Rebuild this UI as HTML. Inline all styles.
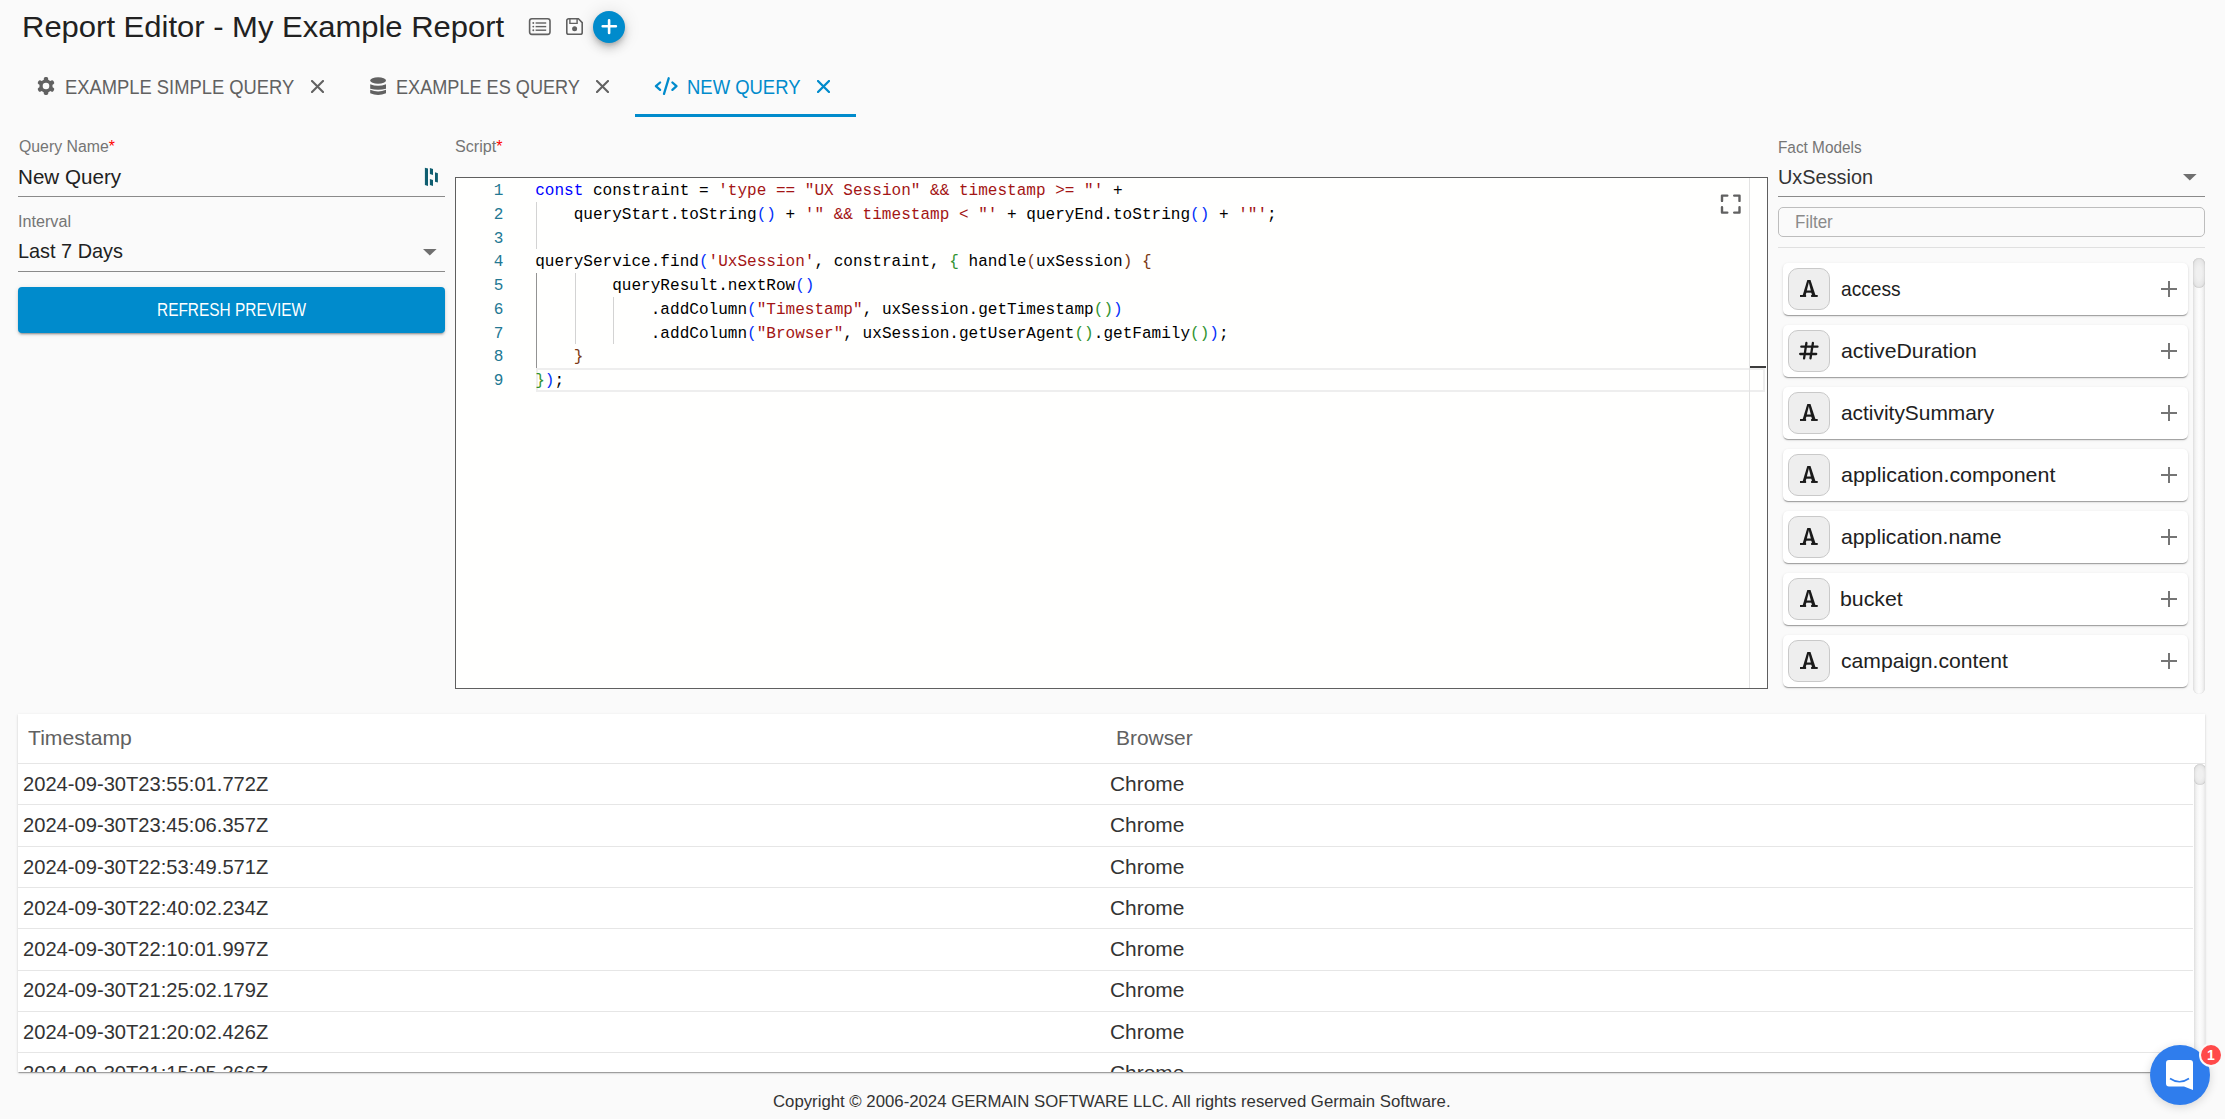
<!DOCTYPE html>
<html><head><meta charset="utf-8">
<style>
*{box-sizing:border-box;margin:0;padding:0}
html,body{width:2225px;height:1119px;overflow:hidden;background:#fafafa;font-family:"Liberation Sans",sans-serif;color:#212121;position:relative}
.abs{position:absolute}
.t{position:absolute;white-space:pre;line-height:1;transform-origin:0 0}
.uline{position:absolute;height:1px;background:#8a8a8a}
.ln{position:absolute;left:0;width:47.5px;margin-top:2px;text-align:right;font-family:"Liberation Mono",monospace;font-size:16.06px;color:#237893;line-height:23.75px}
.code{position:absolute;left:79.2px;margin-top:2px;font-family:"Liberation Mono",monospace;font-size:16.06px;color:#000;white-space:pre;line-height:23.75px}
.k{color:#0000ff}.s{color:#a31515}.b1{color:#0431fa}.b2{color:#319331}.b3{color:#7b3814}
.guide{position:absolute;width:1px}
.card{position:absolute;left:1783px;width:405px;height:52px;background:#fff;border-radius:5px;box-shadow:0 2px 1px -1px rgba(0,0,0,.2),0 1px 1px 0 rgba(0,0,0,.14),0 1px 3px 0 rgba(0,0,0,.12)}
.card .ic{position:absolute;left:5px;top:5px;width:42px;height:42px;background:#eeeeee;border:1px solid #c9c9c9;border-radius:10px}
.pl{position:absolute;width:16px;height:16px}
.pl:before{content:"";position:absolute;left:0;top:7px;width:16px;height:2px;background:#757575}
.pl:after{content:"";position:absolute;left:7px;top:0;width:2px;height:16px;background:#757575}
.sb{position:absolute;width:12px;border-radius:6px;background:linear-gradient(to right,#e2e2e2,#f6f6f6 25%,#fdfdfd 50%,#f6f6f6 75%,#e2e2e2);box-shadow:inset 0 0 1px rgba(0,0,0,.15)}
.thumb{position:absolute;left:0;width:12px;border-radius:6px;background:radial-gradient(ellipse at center,#f0f0f0 30%,#dcdcdc 100%);box-shadow:inset 0 0 1.5px rgba(0,0,0,.25)}
</style></head><body>

<div class="t" style="left:22.22px;top:12.37px;font-size:29.8px;color:#212121;transform:scaleX(1.0400);">Report Editor - My Example Report</div>
<svg class="abs" style="left:528px;top:17px" width="24" height="19" viewBox="0 0 24 19">
  <rect x="1.6" y="1.8" width="20.4" height="15.6" rx="2.3" fill="none" stroke="#616161" stroke-width="1.6"/>
  <circle cx="5.3" cy="6" r="0.95" fill="#616161"/><circle cx="5.3" cy="9.6" r="0.95" fill="#616161"/><circle cx="5.3" cy="13.2" r="0.95" fill="#616161"/>
  <rect x="7.6" y="5.3" width="10.6" height="1.4" fill="#616161"/><rect x="7.6" y="8.9" width="10.6" height="1.4" fill="#616161"/><rect x="7.6" y="12.5" width="10.6" height="1.4" fill="#616161"/>
</svg>
<svg class="abs" style="left:565px;top:17px" width="19" height="19" viewBox="0 0 19 19">
  <path d="M3.6 1.8 H13.4 L17.2 5.6 V15.4 a1.8 1.8 0 0 1 -1.8 1.8 H3.6 a1.8 1.8 0 0 1 -1.8 -1.8 V3.6 a1.8 1.8 0 0 1 1.8 -1.8z" fill="none" stroke="#616161" stroke-width="1.6"/>
  <path d="M4.9 1.8 V6.4 H12.1 V1.8" fill="none" stroke="#616161" stroke-width="1.4"/>
  <circle cx="9.6" cy="11.8" r="2.5" fill="#616161"/>
</svg>
<div class="abs" style="left:593px;top:11px;width:32px;height:32px;border-radius:50%;background:#008bcc;box-shadow:0 3px 5px -1px rgba(0,0,0,.2),0 6px 10px 0 rgba(0,0,0,.14),0 1px 18px 0 rgba(0,0,0,.12)">
  <svg class="abs" style="left:0;top:0" width="32" height="32" viewBox="0 0 32 32"><path d="M9.7 15.3H22.9M16.1 9.2V21.9" stroke="#fff" stroke-width="2.6" stroke-linecap="round"/></svg>
</div>
<svg class="abs" style="left:37.35px;top:77.1px" width="18" height="18" viewBox="-9 -9 18 18"><g fill="#616161"><rect x="-2.2" y="-8.9" width="4.4" height="17.8" rx="1.6"/><rect x="-2.2" y="-8.9" width="4.4" height="17.8" rx="1.6" transform="rotate(60)"/><rect x="-2.2" y="-8.9" width="4.4" height="17.8" rx="1.6" transform="rotate(120)"/><circle r="6.6"/></g><circle r="3.3" fill="#fafafa"/></svg>
<svg class="abs" style="left:311.3px;top:80px" width="13" height="13" viewBox="0 0 13 13"><path d="M1 1L12 12M12 1L1 12" stroke="#616161" stroke-width="2.1" stroke-linecap="round"/></svg>
<svg class="abs" style="left:369px;top:76px" width="18" height="21" viewBox="0 0 18 21"><g fill="#616161"><ellipse cx="9.1" cy="4.45" rx="7.9" ry="3.2"/><path d="M1.2 8.2Q9.1 11.4 17 8.2V12.8Q9.1 14.8 1.2 12.8Z"/><path d="M1.2 13.8Q9.1 17 17 13.8V17.3Q9.1 20.5 1.2 17.3Z"/></g></svg>
<svg class="abs" style="left:596.3px;top:80px" width="13" height="13" viewBox="0 0 13 13"><path d="M1 1L12 12M12 1L1 12" stroke="#616161" stroke-width="2.1" stroke-linecap="round"/></svg>
<svg class="abs" style="left:650px;top:72px" width="32" height="28" viewBox="0 0 32 28"><path d="M10.1 10.5L5.9 14.2L10.1 17.9M22.4 10.5L26.5 14.2L22.4 17.9M18.7 6.3L14 21.8" fill="none" stroke="#008bcc" stroke-width="2.3" stroke-linecap="round" stroke-linejoin="round"/></svg>
<svg class="abs" style="left:817px;top:80px" width="13" height="13" viewBox="0 0 13 13"><path d="M1 1L12 12M12 1L1 12" stroke="#008bcc" stroke-width="2.3" stroke-linecap="round"/></svg>
<div class="abs" style="left:635px;top:114px;width:221px;height:3px;background:#008bcc"></div>
<div class="t" style="left:65.43px;top:76.42px;font-size:21px;color:#616161;transform:scaleX(0.8744);">EXAMPLE SIMPLE QUERY</div>
<div class="t" style="left:395.84px;top:76.42px;font-size:21px;color:#616161;transform:scaleX(0.8625);">EXAMPLE ES QUERY</div>
<div class="t" style="left:687.12px;top:76.42px;font-size:21px;color:#008bcc;transform:scaleX(0.8789);">NEW QUERY</div>
<div class="t" style="left:18.60px;top:139.45px;font-size:16px;color:#757575;transform:scaleX(0.9897);">Query Name<span style="color:#f00">*</span></div>
<div class="t" style="left:17.59px;top:166.54px;font-size:20.5px;color:#212121;transform:scaleX(1.0061);">New Query</div>
<svg class="abs" style="left:424px;top:167px" width="15" height="20" viewBox="0 0 15 20"><g fill="#0f5e70"><path d="M0.9 0.7L4 1.6V19L0.9 18.1z"/><path d="M5.9 1L9 1.9V7.9L5.9 7z"/><path d="M5.9 12L9 12.9V18.9L5.9 18z"/><path d="M11 5.3L13.9 6.2V15.6L11 14.7z"/></g></svg>
<div class="uline" style="left:18px;top:196px;width:427px"></div>
<div class="t" style="left:17.59px;top:214.45px;font-size:16px;color:#757575;transform:scaleX(1.0095);">Interval</div>
<div class="t" style="left:17.64px;top:241.27px;font-size:20.7px;color:#212121;transform:scaleX(0.9602);">Last 7 Days</div>
<svg class="abs" style="left:423.2px;top:249px" width="14" height="7" viewBox="0 0 14 7"><path d="M0 0H13.6L6.8 6.6z" fill="#6f6f6f"/></svg>
<div class="uline" style="left:18px;top:271px;width:427px"></div>
<div class="abs" style="left:18px;top:287px;width:427px;height:46px;background:#008bcc;border-radius:4px;box-shadow:0 3px 1px -2px rgba(0,0,0,.2),0 2px 2px 0 rgba(0,0,0,.14),0 1px 5px 0 rgba(0,0,0,.12)"></div>
<div class="t" style="left:156.98px;top:300.90px;font-size:18.9px;color:#ffffff;transform:scaleX(0.8168);">REFRESH PREVIEW</div>
<div class="t" style="left:455.40px;top:139.45px;font-size:16px;color:#757575;transform:scaleX(1.0086);">Script<span style="color:#f00">*</span></div>
<div class="abs" style="left:455px;top:177px;width:1313px;height:512px;border:1px solid #5f5f5f;background:#fffffe;overflow:hidden">
<div class="abs" style="left:80px;top:190.00px;width:1229px;height:24px;border:2px solid #eeeeee"></div>
<div class="guide" style="left:80px;top:23.75px;height:47.50px;background:#d3d3d3"></div>
<div class="guide" style="left:80px;top:95.00px;height:95.00px;background:#939393"></div>
<div class="guide" style="left:118.5px;top:95.00px;height:71.25px;background:#d3d3d3"></div>
<div class="guide" style="left:157px;top:118.75px;height:47.50px;background:#d3d3d3"></div>
<div class="ln" style="top:0.00px">1</div>
<div class="code" style="top:0.00px"><span class="k">const</span> constraint = <span class="s">'type == "UX Session" &amp;&amp; timestamp &gt;= "'</span> +</div>
<div class="ln" style="top:23.75px">2</div>
<div class="code" style="top:23.75px">    queryStart.toString<span class="b1">()</span> + <span class="s">'" &amp;&amp; timestamp &lt; "'</span> + queryEnd.toString<span class="b1">()</span> + <span class="s">'"'</span>;</div>
<div class="ln" style="top:47.50px">3</div>
<div class="code" style="top:47.50px"></div>
<div class="ln" style="top:71.25px">4</div>
<div class="code" style="top:71.25px">queryService.find<span class="b1">(</span><span class="s">'UxSession'</span>, constraint, <span class="b2">{</span> handle<span class="b3">(</span>uxSession<span class="b3">)</span> <span class="b3">{</span></div>
<div class="ln" style="top:95.00px">5</div>
<div class="code" style="top:95.00px">        queryResult.nextRow<span class="b1">()</span></div>
<div class="ln" style="top:118.75px">6</div>
<div class="code" style="top:118.75px">            .addColumn<span class="b1">(</span><span class="s">"Timestamp"</span>, uxSession.getTimestamp<span class="b2">()</span><span class="b1">)</span></div>
<div class="ln" style="top:142.50px">7</div>
<div class="code" style="top:142.50px">            .addColumn<span class="b1">(</span><span class="s">"Browser"</span>, uxSession.getUserAgent<span class="b2">()</span>.getFamily<span class="b2">()</span><span class="b1">)</span>;</div>
<div class="ln" style="top:166.25px">8</div>
<div class="code" style="top:166.25px">    <span class="b3">}</span></div>
<div class="ln" style="top:190.00px">9</div>
<div class="code" style="top:190.00px"><span class="b2">}</span><span class="b1">)</span>;</div>
<div class="abs" style="left:1293px;top:0;width:1px;height:510px;background:#e3e3e3"></div>
<div class="abs" style="left:1294px;top:188px;width:16px;height:2px;background:#3c3c3c"></div>
<svg class="abs" style="left:1264px;top:16px" width="22" height="21" viewBox="0 0 22 21"><path d="M2 6.9V1.6H7.3M14.2 1.6H19.5V6.9M19.5 13.3V18.6H14.2M7.3 18.6H2V13.3" fill="none" stroke="#616161" stroke-width="2.4" stroke-linecap="round" stroke-linejoin="round"/></svg>
</div>
<div class="t" style="left:1777.76px;top:139.20px;font-size:16.3px;color:#757575;transform:scaleX(0.9425);">Fact Models</div>
<div class="t" style="left:1777.75px;top:165.72px;font-size:21px;color:#333333;transform:scaleX(0.9474);">UxSession</div>
<svg class="abs" style="left:2183.2px;top:174px" width="14" height="7" viewBox="0 0 14 7"><path d="M0 0H13.6L6.8 6.6z" fill="#6f6f6f"/></svg>
<div class="uline" style="left:1778px;top:196px;width:427px"></div>
<div class="abs" style="left:1778px;top:207px;width:427px;height:30px;border:1px solid #bdbdbd;border-radius:5px;background:#fafafa"></div>
<div class="t" style="left:1794.84px;top:213.81px;font-size:17.7px;color:#8a8a8a;transform:scaleX(0.9606);">Filter</div>
<div class="abs" style="left:1778px;top:247px;width:427px;height:1px;background:#e0e0e0"></div>
<div class="card" style="top:263px"><div class="ic"><svg class="abs" style="left:0;top:0" width="40" height="40" viewBox="0 0 40 40"><g fill="#1a1a1a"><path d="M18.3 11H20.4L16.7 26.2H13.7Z"/><path d="M19.2 11H21.5L26.5 26.2H23Z"/><rect x="16.4" y="21.5" width="7.2" height="2.2"/><rect x="11" y="26" width="6.1" height="1.95"/><rect x="22.1" y="26" width="6.6" height="1.95"/></g></svg></div><div class="pl" style="left:378px;top:17.5px"></div></div>
<div class="t" style="left:1840.60px;top:278.96px;font-size:20.6px;color:#212121;transform:scaleX(0.9311);">access</div>
<div class="card" style="top:325px"><div class="ic"><svg class="abs" style="left:0;top:0" width="40" height="40" viewBox="0 0 40 40"><g fill="none" stroke="#1a1a1a" stroke-width="2.3" stroke-linecap="round"><path d="M17.4 12L15.1 27.3M23.9 12L21.5 27.3M12.3 15.7H28.5M11.2 23H27.2"/></g></svg></div><div class="pl" style="left:378px;top:17.5px"></div></div>
<div class="t" style="left:1840.60px;top:340.96px;font-size:20.6px;color:#212121;transform:scaleX(1.0314);">activeDuration</div>
<div class="card" style="top:387px"><div class="ic"><svg class="abs" style="left:0;top:0" width="40" height="40" viewBox="0 0 40 40"><g fill="#1a1a1a"><path d="M18.3 11H20.4L16.7 26.2H13.7Z"/><path d="M19.2 11H21.5L26.5 26.2H23Z"/><rect x="16.4" y="21.5" width="7.2" height="2.2"/><rect x="11" y="26" width="6.1" height="1.95"/><rect x="22.1" y="26" width="6.6" height="1.95"/></g></svg></div><div class="pl" style="left:378px;top:17.5px"></div></div>
<div class="t" style="left:1840.60px;top:402.96px;font-size:20.6px;color:#212121;transform:scaleX(1.0142);">activitySummary</div>
<div class="card" style="top:449px"><div class="ic"><svg class="abs" style="left:0;top:0" width="40" height="40" viewBox="0 0 40 40"><g fill="#1a1a1a"><path d="M18.3 11H20.4L16.7 26.2H13.7Z"/><path d="M19.2 11H21.5L26.5 26.2H23Z"/><rect x="16.4" y="21.5" width="7.2" height="2.2"/><rect x="11" y="26" width="6.1" height="1.95"/><rect x="22.1" y="26" width="6.6" height="1.95"/></g></svg></div><div class="pl" style="left:378px;top:17.5px"></div></div>
<div class="t" style="left:1840.60px;top:464.96px;font-size:20.6px;color:#212121;transform:scaleX(1.0404);">application.component</div>
<div class="card" style="top:511px"><div class="ic"><svg class="abs" style="left:0;top:0" width="40" height="40" viewBox="0 0 40 40"><g fill="#1a1a1a"><path d="M18.3 11H20.4L16.7 26.2H13.7Z"/><path d="M19.2 11H21.5L26.5 26.2H23Z"/><rect x="16.4" y="21.5" width="7.2" height="2.2"/><rect x="11" y="26" width="6.1" height="1.95"/><rect x="22.1" y="26" width="6.6" height="1.95"/></g></svg></div><div class="pl" style="left:378px;top:17.5px"></div></div>
<div class="t" style="left:1840.60px;top:526.96px;font-size:20.6px;color:#212121;transform:scaleX(1.0313);">application.name</div>
<div class="card" style="top:573px"><div class="ic"><svg class="abs" style="left:0;top:0" width="40" height="40" viewBox="0 0 40 40"><g fill="#1a1a1a"><path d="M18.3 11H20.4L16.7 26.2H13.7Z"/><path d="M19.2 11H21.5L26.5 26.2H23Z"/><rect x="16.4" y="21.5" width="7.2" height="2.2"/><rect x="11" y="26" width="6.1" height="1.95"/><rect x="22.1" y="26" width="6.6" height="1.95"/></g></svg></div><div class="pl" style="left:378px;top:17.5px"></div></div>
<div class="t" style="left:1839.57px;top:588.96px;font-size:20.6px;color:#212121;transform:scaleX(1.0341);">bucket</div>
<div class="card" style="top:635px"><div class="ic"><svg class="abs" style="left:0;top:0" width="40" height="40" viewBox="0 0 40 40"><g fill="#1a1a1a"><path d="M18.3 11H20.4L16.7 26.2H13.7Z"/><path d="M19.2 11H21.5L26.5 26.2H23Z"/><rect x="16.4" y="21.5" width="7.2" height="2.2"/><rect x="11" y="26" width="6.1" height="1.95"/><rect x="22.1" y="26" width="6.6" height="1.95"/></g></svg></div><div class="pl" style="left:378px;top:17.5px"></div></div>
<div class="t" style="left:1840.60px;top:650.96px;font-size:20.6px;color:#212121;transform:scaleX(1.0261);">campaign.content</div>
<div class="sb" style="left:2193px;top:258px;height:436px"><div class="thumb" style="top:0;height:30px"></div></div>
<div class="abs" style="left:18px;top:714px;width:2187px;height:358px;background:#fff;box-shadow:0 2px 1px -1px rgba(0,0,0,.2),0 1px 1px 0 rgba(0,0,0,.14),0 1px 3px 0 rgba(0,0,0,.12)"></div>
<div class="abs" style="left:18px;top:763px;width:2187px;height:1px;background:#e6e6e6"></div>
<div class="abs" style="left:18px;top:804.40px;width:2175px;height:1px;background:#e6e6e6"></div>
<div class="abs" style="left:18px;top:845.73px;width:2175px;height:1px;background:#e6e6e6"></div>
<div class="abs" style="left:18px;top:887.06px;width:2175px;height:1px;background:#e6e6e6"></div>
<div class="abs" style="left:18px;top:928.39px;width:2175px;height:1px;background:#e6e6e6"></div>
<div class="abs" style="left:18px;top:969.72px;width:2175px;height:1px;background:#e6e6e6"></div>
<div class="abs" style="left:18px;top:1011.05px;width:2175px;height:1px;background:#e6e6e6"></div>
<div class="abs" style="left:18px;top:1052.38px;width:2175px;height:1px;background:#e6e6e6"></div>
<div class="t" style="left:28.30px;top:727.22px;font-size:21px;color:#616161;transform:scaleX(1.0079);">Timestamp</div>
<div class="t" style="left:1115.50px;top:727.22px;font-size:21px;color:#616161;transform:scaleX(0.9957);">Browser</div>
<div class="abs" style="left:18px;top:764px;width:2187px;height:308px;overflow:hidden">
<div class="t" style="left:4.58px;top:10.84px;font-size:19.8px;color:#333333;transform:scaleX(1.0185);">2024-09-30T23:55:01.772Z</div>
<div class="t" style="left:1092.44px;top:10.84px;font-size:19.8px;color:#333333;transform:scaleX(1.0569);">Chrome</div>
<div class="t" style="left:4.58px;top:52.17px;font-size:19.8px;color:#333333;transform:scaleX(1.0185);">2024-09-30T23:45:06.357Z</div>
<div class="t" style="left:1092.44px;top:52.17px;font-size:19.8px;color:#333333;transform:scaleX(1.0569);">Chrome</div>
<div class="t" style="left:4.58px;top:93.50px;font-size:19.8px;color:#333333;transform:scaleX(1.0185);">2024-09-30T22:53:49.571Z</div>
<div class="t" style="left:1092.44px;top:93.50px;font-size:19.8px;color:#333333;transform:scaleX(1.0569);">Chrome</div>
<div class="t" style="left:4.58px;top:134.83px;font-size:19.8px;color:#333333;transform:scaleX(1.0185);">2024-09-30T22:40:02.234Z</div>
<div class="t" style="left:1092.44px;top:134.83px;font-size:19.8px;color:#333333;transform:scaleX(1.0569);">Chrome</div>
<div class="t" style="left:4.58px;top:176.16px;font-size:19.8px;color:#333333;transform:scaleX(1.0185);">2024-09-30T22:10:01.997Z</div>
<div class="t" style="left:1092.44px;top:176.16px;font-size:19.8px;color:#333333;transform:scaleX(1.0569);">Chrome</div>
<div class="t" style="left:4.58px;top:217.49px;font-size:19.8px;color:#333333;transform:scaleX(1.0185);">2024-09-30T21:25:02.179Z</div>
<div class="t" style="left:1092.44px;top:217.49px;font-size:19.8px;color:#333333;transform:scaleX(1.0569);">Chrome</div>
<div class="t" style="left:4.58px;top:258.82px;font-size:19.8px;color:#333333;transform:scaleX(1.0185);">2024-09-30T21:20:02.426Z</div>
<div class="t" style="left:1092.44px;top:258.82px;font-size:19.8px;color:#333333;transform:scaleX(1.0569);">Chrome</div>
<div class="t" style="left:4.58px;top:300.15px;font-size:19.8px;color:#333333;transform:scaleX(1.0185);">2024-09-30T21:15:05.366Z</div>
<div class="t" style="left:1092.44px;top:300.15px;font-size:19.8px;color:#333333;transform:scaleX(1.0569);">Chrome</div>
<div class="sb" style="left:2176px;top:0;height:320px"><div class="thumb" style="top:0;height:21px"></div></div>
</div>
<div class="t" style="left:773.00px;top:1093.05px;font-size:17.3px;color:#333333;transform:scaleX(0.9696);">Copyright © 2006-2024 GERMAIN SOFTWARE LLC. All rights reserved Germain Software.</div>
<div class="abs" style="left:2150px;top:1045px;width:60px;height:60px;border-radius:50%;background:#2f7ded;box-shadow:0 2px 10px rgba(0,0,0,.15)">
<svg class="abs" style="left:16px;top:15px" width="28" height="31" viewBox="0 0 28 31"><path d="M3 0H24a3 3 0 0 1 3 3V30L18 26.5H3a3 3 0 0 1 -3 -3V3a3 3 0 0 1 3 -3z" fill="#fff"/><path d="M4 18.5Q13.5 25 23 18.5" fill="none" stroke="#2f7ded" stroke-width="1.6"/></svg>
</div>
<div class="abs" style="left:2199px;top:1043px;width:24px;height:24px;border-radius:50%;background:#fafafa"></div>
<div class="abs" style="left:2201px;top:1045px;width:20px;height:20px;border-radius:50%;background:#ff4a4a;color:#fff;font-weight:bold;font-size:14px;line-height:20px;text-align:center">1</div>
</body></html>
